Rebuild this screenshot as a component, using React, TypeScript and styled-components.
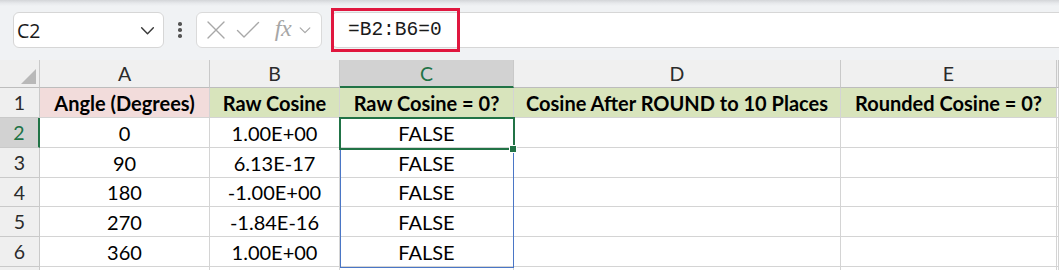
import React from 'react';
import styled, { createGlobalStyle } from 'styled-components';

const GlobalStyle = createGlobalStyle`
  html, body {
    margin: 0;
    padding: 0;
    background: #ffffff;
    overflow: hidden;
  }
  * { box-sizing: border-box; }
`;

const GREEN = '#217346';
const BLUE = '#4a76c6';
const GRID = '#d4d4d4';

const Page = styled.div`
  width: 1059px;
  height: 270px;
  overflow: hidden;
  font-family: Lato, 'Liberation Sans', sans-serif;
`;

const Toolbar = styled.div`
  height: 60px;
  display: flex;
  align-items: center;
  padding: 0 0 0 13px;
  background: linear-gradient(#d3d5d8 0px, #e6e8eb 3px, #f0f2f4 6px, #f0f2f4 100%);
`;

const NameBox = styled.div`
  width: 151px;
  height: 36px;
  display: flex;
  align-items: center;
  justify-content: space-between;
  padding: 0 7px 0 3px;
  background: #ffffff;
  border: 1px solid #d6d6d6;
  border-radius: 6px;
  font-family: 'Open Sans', 'Liberation Sans', sans-serif;
  font-size: 19.5px;
  color: #1a1a1a;
`;

const Dots = styled.div`
  width: 32px;
  display: flex;
  flex-direction: column;
  align-items: center;
  gap: 2.5px;

  span {
    width: 3.5px;
    height: 3.5px;
    border-radius: 50%;
    background: #555;
  }
`;

const FxBox = styled.div`
  width: 126px;
  height: 36px;
  display: flex;
  align-items: center;
  padding: 0 0 0 7px;
  background: #ffffff;
  border: 1px solid #dadada;
  border-radius: 6px;
`;

const IconSlot = styled.div<{ $w: number }>`
  width: ${({ $w }) => $w}px;
  display: flex;
  align-items: center;
  justify-content: center;
`;

const Fx = styled.span`
  font-family: 'Liberation Serif', serif;
  font-style: italic;
  font-size: 24px;
  color: #a6a6a6;
  letter-spacing: -0.5px;
  margin-top: -3px;
`;

const FormulaBar = styled.div`
  position: relative;
  margin-left: 9px;
  flex: 1;
  height: 36px;
  display: flex;
  align-items: center;
  padding-left: 16px;
  background: #ffffff;
  border: 1px solid #d6d6d6;
  border-right: none;
  border-radius: 6px 0 0 6px;
  font-family: 'Liberation Mono', monospace;
  font-size: 19.5px;
  color: #1a1a1a;
`;

const Highlight = styled.div`
  position: absolute;
  left: -1px;
  top: -5px;
  width: 129px;
  height: 44px;
  border: 3px solid #e0173f;
`;

const Sheet = styled.div`
  position: relative;
  display: grid;
  grid-template-columns: 40px 170px 130px 174px 327px 216px 1fr;
  grid-template-rows: 28px 30px 30px 30px 29px 30px 30px 10px;
`;

const Corner = styled.div`
  position: relative;
  background: #efefef;
  border-right: 1px solid #c9c9c9;
  border-bottom: 1px solid #bdbdbd;

  &::after {
    content: '';
    position: absolute;
    right: 3px;
    bottom: 3px;
    border-style: solid;
    border-width: 0 0 15px 15px;
    border-color: transparent transparent #b8b8b8 transparent;
  }
`;

const ColHeader = styled.div<{ $selected?: boolean }>`
  display: flex;
  align-items: center;
  justify-content: center;
  font-size: 19.5px;
  color: ${({ $selected }) => ($selected ? GREEN : '#2b2b2b')};
  background: ${({ $selected }) => ($selected ? '#d2d2d2' : '#f0f0f0')};
  border-right: 1px solid #c9c9c9;
  border-bottom: ${({ $selected }) => ($selected ? `2px solid ${GREEN}` : '1px solid #bdbdbd')};
  padding-top: ${({ $selected }) => ($selected ? '1px' : '0')};
`;

const RowHeader = styled.div<{ $selected?: boolean }>`
  display: flex;
  align-items: center;
  justify-content: center;
  font-size: 19.5px;
  color: ${({ $selected }) => ($selected ? GREEN : '#2b2b2b')};
  background: ${({ $selected }) => ($selected ? '#d2d2d2' : '#efefef')};
  border-right: ${({ $selected }) => ($selected ? `2px solid ${GREEN}` : '1px solid #c9c9c9')};
  border-bottom: 1px solid #c9c9c9;
`;

const Cell = styled.div<{ $fill?: string; $bold?: boolean }>`
  display: flex;
  align-items: center;
  justify-content: center;
  white-space: nowrap;
  overflow: hidden;
  font-size: 20px;
  font-weight: ${({ $bold }) => ($bold ? 700 : 400)};
  color: #000000;
  background: ${({ $fill }) => $fill || '#ffffff'};
  border-right: 1px solid ${GRID};
  border-bottom: 1px solid ${GRID};
`;

const RangeBox = styled.div`
  position: absolute;
  left: 340px;
  top: 58px;
  width: 174px;
  height: 150px;
  border: 1.5px solid ${BLUE};
  pointer-events: none;
`;

const ActiveBox = styled.div`
  position: absolute;
  left: 339px;
  top: 57px;
  width: 176px;
  height: 33px;
  border: 2.5px solid ${GREEN};
  pointer-events: none;
`;

const FillHandle = styled.div`
  position: absolute;
  left: 509px;
  top: 85px;
  width: 8px;
  height: 8px;
  background: ${GREEN};
  border: 1px solid #ffffff;
  pointer-events: none;
`;

const PINK = '#f2dcdb';
const OLIVE = '#d8e4bc';

const headers: { text: string; fill: string }[] = [
  { text: 'Angle (Degrees)', fill: PINK },
  { text: 'Raw Cosine', fill: OLIVE },
  { text: 'Raw Cosine = 0?', fill: OLIVE },
  { text: 'Cosine After ROUND to 10 Places', fill: OLIVE },
  { text: 'Rounded Cosine = 0?', fill: OLIVE },
];

const rows: [string, string, string][] = [
  ['0', '1.00E+00', 'FALSE'],
  ['90', '6.13E-17', 'FALSE'],
  ['180', '-1.00E+00', 'FALSE'],
  ['270', '-1.84E-16', 'FALSE'],
  ['360', '1.00E+00', 'FALSE'],
];

const Chevron = ({ size = 14, color = '#444' }: { size?: number; color?: string }) => (
  <svg width={size} height={size} viewBox="0 0 16 16" fill="none">
    <path d="M2.5 5.5 L8 11 L13.5 5.5" stroke={color} strokeWidth="1.4" strokeLinecap="round" strokeLinejoin="round" />
  </svg>
);

const App = (): JSX.Element => (
  <Page>
    <GlobalStyle />
    <Toolbar>
      <NameBox>
        <span>C2</span>
        <Chevron size={17} color="#3a3a3a" />
      </NameBox>
      <Dots>
        <span />
        <span />
        <span />
      </Dots>
      <FxBox>
        <IconSlot $w={24}>
          <svg width="20" height="20" viewBox="0 0 20 20" fill="none">
            <path d="M2 2 L18 18 M18 2 L2 18" stroke="#a8a8a8" strokeWidth="1.4" strokeLinecap="round" />
          </svg>
        </IconSlot>
        <IconSlot $w={40}>
          <svg width="24" height="18" viewBox="0 0 24 18" fill="none">
            <path d="M1.5 9.5 L8 16 L22.5 1.5" stroke="#a8a8a8" strokeWidth="1.4" strokeLinecap="round" strokeLinejoin="round" />
          </svg>
        </IconSlot>
        <IconSlot $w={30}>
          <Fx>fx</Fx>
        </IconSlot>
        <IconSlot $w={14}>
          <Chevron size={14} color="#a8a8a8" />
        </IconSlot>
      </FxBox>
      <FormulaBar>
        =B2:B6=0
        <Highlight />
      </FormulaBar>
    </Toolbar>

    <Sheet>
      <Corner />
      {['A', 'B', 'C', 'D', 'E'].map((c) => (
        <ColHeader key={c} $selected={c === 'C'}>
          {c}
        </ColHeader>
      ))}
      <ColHeader />

      <RowHeader>1</RowHeader>
      {headers.map((h) => (
        <Cell key={h.text} $fill={h.fill} $bold>
          {h.text}
        </Cell>
      ))}
      <Cell />

      {rows.map((r, i) => (
        <React.Fragment key={r[0]}>
          <RowHeader $selected={i === 0}>{i + 2}</RowHeader>
          <Cell>{r[0]}</Cell>
          <Cell>{r[1]}</Cell>
          <Cell>{r[2]}</Cell>
          <Cell />
          <Cell />
          <Cell />
        </React.Fragment>
      ))}

      <RowHeader />
      <Cell />
      <Cell />
      <Cell />
      <Cell />
      <Cell />
      <Cell />

      <RangeBox />
      <ActiveBox />
      <FillHandle />
    </Sheet>
  </Page>
);

export default App;
